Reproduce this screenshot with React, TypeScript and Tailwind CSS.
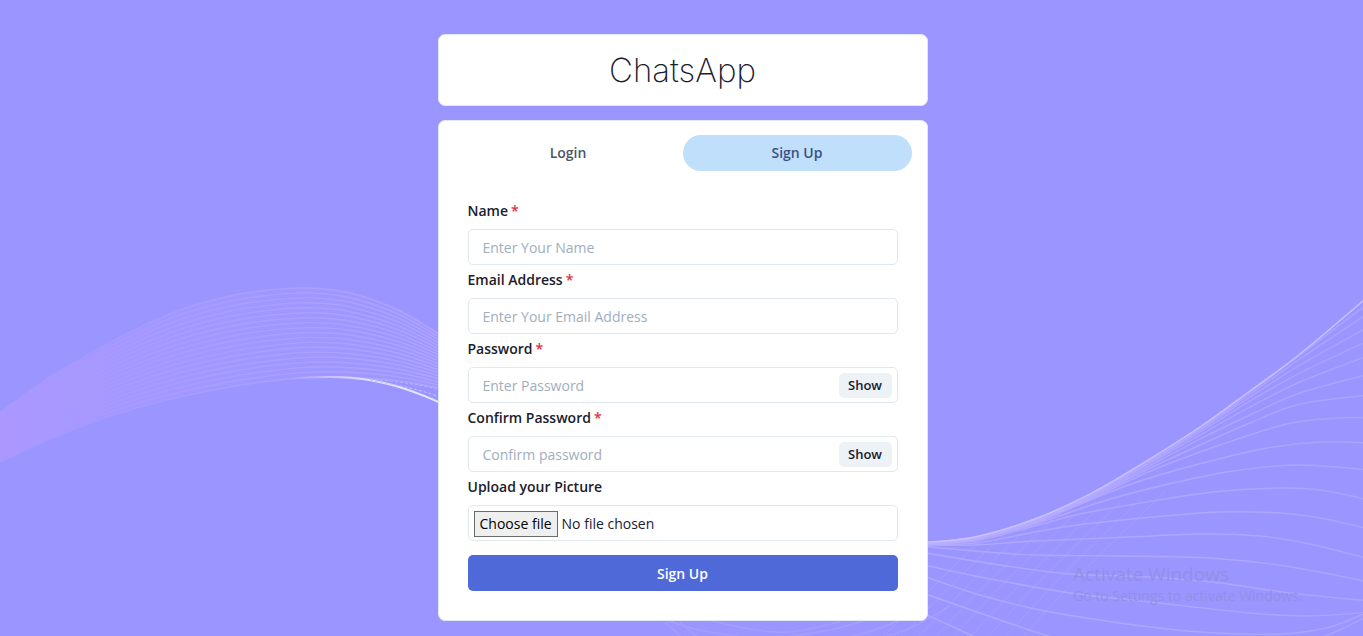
import { useState } from 'react';
import type { ReactNode } from 'react';

type Point = [number, number];

/** Smooth cubic path through the given points (Catmull-Rom). */
function smooth(points: Point[]): string {
  let d = `M${points[0][0]} ${points[0][1]}`;
  for (let i = 0; i < points.length - 1; i++) {
    const a = points[Math.max(i - 1, 0)];
    const b = points[i];
    const c = points[i + 1];
    const e = points[Math.min(i + 2, points.length - 1)];
    d += ` C${(b[0] + (c[0] - a[0]) / 6).toFixed(1)} ${(b[1] + (c[1] - a[1]) / 6).toFixed(1)} ${(c[0] - (e[0] - b[0]) / 6).toFixed(1)} ${(c[1] - (e[1] - b[1]) / 6).toFixed(1)} ${c[0].toFixed(1)} ${c[1].toFixed(1)}`;
  }
  return d;
}

function mix(from: Point[], to: Point[], t: number): Point[] {
  return from.map((p, i) => [p[0] + (to[i][0] - p[0]) * t, p[1] + (to[i][1] - p[1]) * t] as Point);
}

const leftTop: Point[] = [[-10, 419], [40, 383], [80, 359], [130, 332], [180, 310], [230, 296], [270, 290], [310, 288], [350, 293], [400, 311], [450, 341]];
const leftBottom: Point[] = [[-10, 467], [40, 444], [80, 427], [130, 410], [180, 397], [230, 387], [270, 381], [310, 377], [350, 377], [400, 381], [450, 390]];

const rightLines: Point[][] = [
  [[920, 543], [975, 537], [1035, 519], [1090, 494], [1140, 465], [1200, 427], [1250, 391], [1300, 354], [1370, 295]],
  [[920, 543], [975, 537], [1035, 519], [1090, 494], [1140, 466], [1200, 428], [1250, 392], [1300, 355], [1370, 302]],
  [[920, 543], [975, 538], [1035, 520], [1090, 495], [1140, 467], [1200, 429], [1250, 394], [1300, 359], [1370, 312]],
  [[920, 543], [975, 538], [1035, 520], [1090, 495], [1140, 467], [1200, 430], [1250, 397], [1300, 365], [1370, 326]],
  [[920, 543], [975, 538], [1035, 520], [1090, 496], [1140, 468], [1200, 432], [1250, 401], [1300, 373], [1370, 340]],
  [[920, 543], [975, 538], [1035, 521], [1090, 496], [1140, 469], [1200, 435], [1250, 407], [1300, 382], [1370, 355]],
  [[920, 544], [975, 538], [1035, 521], [1090, 497], [1140, 471], [1200, 439], [1250, 415], [1300, 393], [1370, 374]],
  [[920, 544], [975, 539], [1035, 521], [1090, 498], [1140, 473], [1200, 445], [1250, 423], [1300, 404], [1370, 395]],
  [[920, 544], [975, 539], [1035, 522], [1090, 499], [1153, 470], [1220, 445], [1287, 424], [1337, 418], [1370, 418]],
  [[920, 544], [975, 539], [1035, 523], [1090, 500], [1140, 481], [1203, 463], [1267, 448], [1320, 442], [1370, 443]],
  [[920, 544], [975, 540], [1035, 524], [1107, 500], [1173, 483], [1233, 471], [1297, 465], [1370, 470]],
  [[920, 545], [975, 541], [1035, 526], [1080, 514], [1153, 501], [1213, 492], [1280, 488], [1320, 490], [1370, 500]],
  [[920, 545], [975, 543], [1035, 532], [1077, 525], [1153, 517], [1220, 512], [1280, 513], [1320, 518], [1370, 529]],
  [[920, 545], [975, 545], [1035, 541], [1130, 537], [1200, 534], [1260, 536], [1310, 544], [1370, 559]],
  [[920, 546], [975, 551], [1035, 555], [1120, 556], [1210, 558], [1285, 566], [1370, 582]],
  [[920, 552], [1000, 565], [1070, 574], [1150, 577], [1220, 583], [1290, 593], [1370, 601]],
  [[920, 564], [980, 577], [1070, 593], [1150, 602], [1250, 613], [1310, 616], [1370, 612]],
  [[920, 575], [980, 595], [1040, 610], [1120, 623], [1200, 632], [1280, 634], [1330, 627], [1370, 611]],
  [[920, 592], [1000, 620], [1060, 640]],
  [[920, 612], [960, 630], [990, 645]],
  [[1300, 645], [1335, 632], [1370, 615]],
];

const crossFrom: Point[] = [[880, 640], [915, 605], [950, 570], [985, 536]];
const crossTo: Point[] = [[1020, 640], [1075, 580], [1120, 535], [1165, 492]];

const lowerArcs: Point[][] = [
  [[660, 618], [700, 630], [760, 638], [830, 630], [890, 612]],
  [[700, 618], [750, 629], [790, 632], [840, 622]],
  [[820, 645], [880, 628], [930, 606]],
  [[860, 645], [910, 628], [950, 606]],
  [[665, 622], [690, 645]],
  [[680, 622], [706, 645]],
];

function Waves() {
  const band = smooth(leftTop) + ' ' + smooth([...leftBottom].reverse()).replace('M', 'L') + ' Z';
  return (
    <svg aria-hidden="true" className="pointer-events-none absolute inset-0 size-full" viewBox="0 0 1363 636" preserveAspectRatio="none" fill="none">
      <defs>
        <linearGradient id="bandFill" gradientUnits="userSpaceOnUse" x1="0" y1="0" x2="440" y2="0">
          <stop offset="0" stopColor="#ac98ff" stopOpacity="0.95" />
          <stop offset="0.25" stopColor="#a798ff" stopOpacity="0.75" />
          <stop offset="0.6" stopColor="#a498ff" stopOpacity="0.5" />
          <stop offset="1" stopColor="#a398ff" stopOpacity="0.4" />
        </linearGradient>
        <linearGradient id="bandLine" gradientUnits="userSpaceOnUse" x1="0" y1="0" x2="440" y2="0">
          <stop offset="0" stopColor="#ac9cff" stopOpacity="0" />
          <stop offset="0.2" stopColor="#ac9dff" stopOpacity="0.3" />
          <stop offset="0.5" stopColor="#ada0ff" stopOpacity="0.8" />
          <stop offset="1" stopColor="#b0a4ff" />
        </linearGradient>
        <linearGradient id="glow" gradientUnits="userSpaceOnUse" x1="290" y1="0" x2="370" y2="0">
          <stop offset="0" stopColor="#ffffff" stopOpacity="0" />
          <stop offset="1" stopColor="#ffffff" stopOpacity="0.75" />
        </linearGradient>
        <linearGradient id="fan" gradientUnits="userSpaceOnUse" x1="920" y1="0" x2="1363" y2="0">
          <stop offset="0" stopColor="#b9b0ff" stopOpacity="0.7" />
          <stop offset="1" stopColor="#aca3ff" />
        </linearGradient>
      </defs>
      <path d={band} fill="url(#bandFill)" />
      {Array.from({ length: 19 }, (_, i) => (
        <path key={i} d={smooth(mix(leftTop, leftBottom, i / 18))} stroke="url(#bandLine)" strokeWidth="1.4" />
      ))}
      <path d="M290 379 C350 373 390 379 445 405" stroke="url(#glow)" strokeWidth="2" />
      <path d="M370 380 C400 386 420 389 445 399" stroke="#c9c1ff" strokeDasharray="3 2" />
      <path d="M370 379 C400 382 420 384 445 391" stroke="#bdb4ff" strokeDasharray="3 2" />
      {rightLines.map((line, i) => (
        <path key={i} d={smooth(line)} stroke="url(#fan)" strokeWidth="1.4" />
      ))}
      <path d={smooth(rightLines[0])} stroke="#cfc8ff" strokeWidth="1.4" strokeOpacity="0.8" />
      {Array.from({ length: 9 }, (_, i) => (
        <path key={i} d={smooth(mix(crossFrom, crossTo, i / 8))} stroke="#b3a9ff" strokeOpacity="0.4" />
      ))}
      {lowerArcs.map((line, i) => (
        <path key={i} d={smooth(line)} stroke="#aba1ff" strokeWidth="1.5" strokeOpacity="0.7" />
      ))}
    </svg>
  );
}

const inputClass =
  'h-9 w-full rounded-[5px] border border-[#e2e8f0] bg-white px-[14px] pt-px text-sm text-[#1a202c] outline-none placeholder:text-[#a0aec0] focus:border-[#3182ce]';

function Field({ id, label, required, children }: { id: string; label: string; required?: boolean; children: ReactNode }) {
  return (
    <div>
      <label htmlFor={id} className="mb-[7px] block text-sm leading-[22px] font-semibold">
        {label}
        {required && <span className="ml-[3px] text-[#e02f3f]">*</span>}
      </label>
      {children}
    </div>
  );
}

function PasswordInput({ id, placeholder }: { id: string; placeholder: string }) {
  const [shown, setShown] = useState(false);
  return (
    <div className="relative">
      <input id={id} type={shown ? 'text' : 'password'} placeholder={placeholder} className={`${inputClass} pr-16`} />
      <button
        type="button"
        onClick={() => setShown(!shown)}
        className="absolute inset-y-0 right-[6px] my-auto h-[25px] w-[53px] rounded-[5px] bg-[#edf2f7] pt-px text-[13px] font-semibold"
      >
        {shown ? 'Hide' : 'Show'}
      </button>
    </div>
  );
}

export default function App() {
  const [tab, setTab] = useState<'login' | 'signup'>('signup');
  const [fileName, setFileName] = useState('No file chosen');
  const tabClass = 'h-9 flex-1 rounded-full text-sm font-semibold';

  return (
    <div className="relative min-h-screen overflow-hidden bg-[#9b96ff] pl-0.5 font-['Open_Sans','Noto_Sans',sans-serif] text-[#1a202c]">
      <Waves />
      <main className="relative mx-auto flex w-full max-w-[490px] flex-col gap-[14px] pt-[34px] pb-[15px]">
        <header className="rounded-[7px] border border-[#e2e8f0] bg-white py-3 text-center">
          <h1 className="font-['Inter',sans-serif] text-[33px] leading-[46px] font-extralight">ChatsApp</h1>
        </header>

        <section className="rounded-[7px] border border-[#e2e8f0] bg-white px-[15px] py-[14px]">
          <div role="tablist" className="flex">
            <button
              type="button"
              role="tab"
              aria-selected={tab === 'login'}
              onClick={() => setTab('login')}
              className={`${tabClass} ${tab === 'login' ? 'bg-[#c0dffb] text-[#3b5088]' : 'text-[#4a5568]'}`}
            >
              Login
            </button>
            <button
              type="button"
              role="tab"
              aria-selected={tab === 'signup'}
              onClick={() => setTab('signup')}
              className={`${tabClass} ${tab === 'signup' ? 'bg-[#c0dffb] text-[#3b5088]' : 'text-[#4a5568]'}`}
            >
              Sign Up
            </button>
          </div>

          <form className="flex flex-col gap-1 px-[14px] pt-[29px] pb-[15px]" onSubmit={(e) => e.preventDefault()}>
            {tab === 'signup' && (
              <Field id="name" label="Name" required>
                <input id="name" type="text" placeholder="Enter Your Name" className={inputClass} />
              </Field>
            )}
            <Field id="email" label="Email Address" required>
              <input id="email" type="email" placeholder="Enter Your Email Address" className={inputClass} />
            </Field>
            <Field id="password" label="Password" required>
              <PasswordInput id="password" placeholder="Enter Password" />
            </Field>
            {tab === 'signup' && (
              <>
                <Field id="confirm" label="Confirm Password" required>
                  <PasswordInput id="confirm" placeholder="Confirm password" />
                </Field>
                <Field id="picture" label="Upload your Picture">
                  <div className="relative flex h-9 items-center gap-1 rounded-[5px] border border-[#e2e8f0] px-[5px] pt-px text-sm">
                    <span className="flex h-[26px] items-center border border-[#6b6b6b] bg-[#efefef] px-[5px] text-black">Choose file</span>
                    <span>{fileName}</span>
                    <input
                      id="picture"
                      type="file"
                      accept="image/*"
                      onChange={(e) => setFileName(e.target.files?.[0]?.name ?? 'No file chosen')}
                      className="absolute inset-0 size-full cursor-pointer opacity-0"
                    />
                  </div>
                </Field>
              </>
            )}
            <button type="submit" className="mt-[10px] h-9 w-full rounded-[5px] bg-[#4f69d9] pt-px text-sm font-semibold text-white">
              {tab === 'signup' ? 'Sign Up' : 'Login'}
            </button>
          </form>
        </section>
      </main>

      <aside className="pointer-events-none absolute right-[54px] bottom-[30px] w-[236px] whitespace-nowrap text-[#9190e6]">
        <p className="text-[19px] leading-6">Activate Windows</p>
        <p className="text-sm leading-5">Go to Settings to activate Windows.</p>
      </aside>
    </div>
  );
}
